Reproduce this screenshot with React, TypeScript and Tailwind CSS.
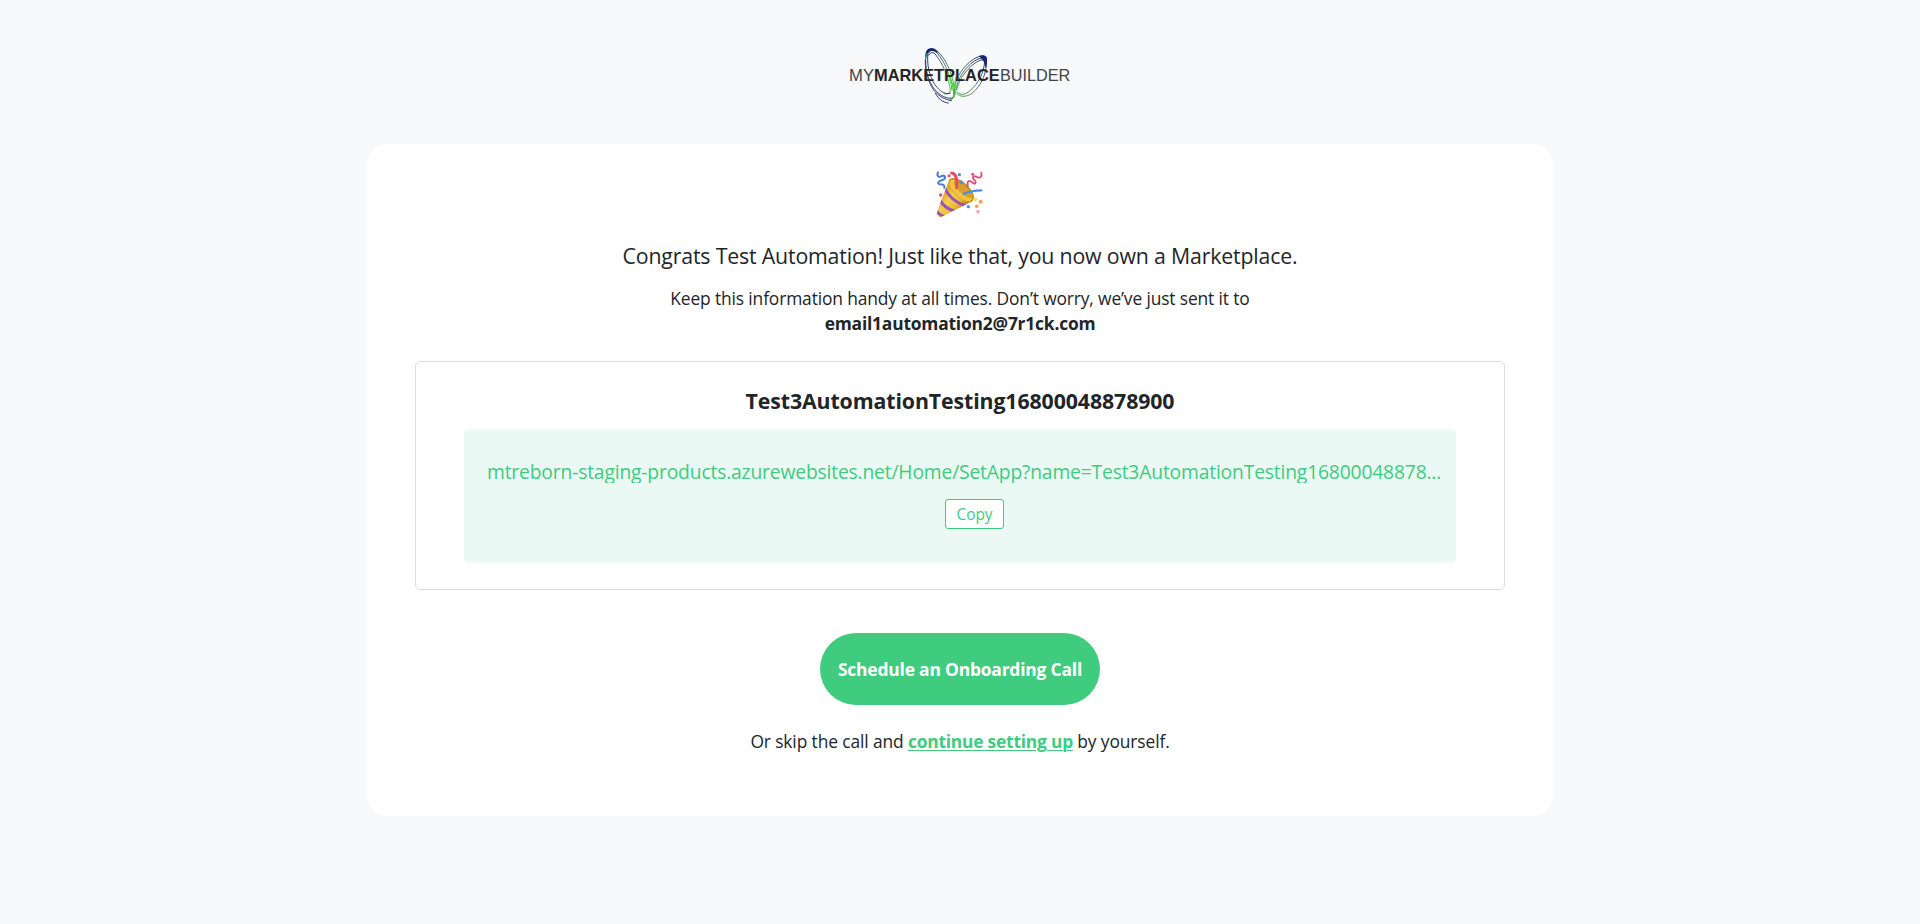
function Logo() {
  return (
    <svg width="240" height="70" viewBox="0 0 720 210" role="img" aria-label="MyMarketplaceBuilder">
      <defs>
        <linearGradient id="wingL" gradientUnits="userSpaceOnUse" x1="262" y1="30" x2="335" y2="170">
          <stop offset="0" stopColor="#15276a" />
          <stop offset="0.22" stopColor="#3f5f7c" />
          <stop offset="0.5" stopColor="#6a8a6c" />
          <stop offset="0.8" stopColor="#46c53a" />
          <stop offset="1" stopColor="#3a7f45" />
        </linearGradient>
        <linearGradient id="wingR" gradientUnits="userSpaceOnUse" x1="438" y1="48" x2="345" y2="165">
          <stop offset="0" stopColor="#15276a" />
          <stop offset="0.3" stopColor="#4e5c72" />
          <stop offset="0.7" stopColor="#5f7f66" />
          <stop offset="1" stopColor="#3fa93a" />
        </linearGradient>
        <linearGradient id="tail" gradientUnits="userSpaceOnUse" x1="255" y1="60" x2="330" y2="185">
          <stop offset="0" stopColor="#1b3a7c" />
          <stop offset="0.4" stopColor="#565e6c" />
          <stop offset="1" stopColor="#28356f" />
        </linearGradient>
      </defs>
      <g fill="none" strokeLinecap="round">
        <g stroke="url(#wingL)" strokeWidth="3">
          <path d="M258 50C260 22 280 20 295 36C318 60 336 96 342 140" />
          <path d="M262 48C268 24 282 30 292 40C313 64 330 100 336 150" />
          <path d="M266 46C276 30 284 40 290 48C308 72 324 106 331 148C331 160 322 164 312 161" />
          <path d="M342 140C344 165 340 176 334 178" />
        </g>
        <g stroke="url(#tail)" strokeWidth="3">
          <path d="M258 46C253 80 264 124 284 148C300 168 322 178 338 174" />
          <path d="M263 50C261 84 273 122 291 142C304 157 318 164 330 160" />
          <path d="M256 60C254 100 270 140 288 158C298 168 312 178 334 182" />
          <path d="M286 160C296 178 310 188 325 189" />
        </g>
        <g stroke="url(#wingR)" strokeWidth="3">
          <path d="M439 62C440 44 422 44 400 58C370 78 346 112 343 150" />
          <path d="M436 62C434 50 420 52 402 64C376 82 352 114 347 152" />
          <path d="M432 60C420 56 404 70 392 80C370 100 356 124 350 150" />
          <path d="M439 62C442 96 424 138 396 160C378 172 360 172 350 160" />
          <path d="M434 64C432 98 416 130 390 152C375 165 362 167 352 156" />
        </g>
        <g stroke="#49d535" strokeWidth="4">
          <path d="M324 100C335 120 342 140 342 172" />
          <path d="M348 112C343 130 343 142 346 162" />
        </g>
        <path d="M330 178C340 178 345 166 342 150" stroke="#3aa338" strokeWidth="3" />
      </g>
      <path d="M256 48C256 32 264 22 277 25C287 28 292 34 297 40C286 34 276 30 269 34C263 38 261 44 260 52Z" fill="#152468" />
      <path d="M416 48C430 43 441 46 441 56C442 66 440 76 436 84C435 70 431 60 416 48Z" fill="#182870" />
      <path d="M256 42L262 39L261 50L256 53Z" fill="#189b97" />
      <g fontFamily="'Liberation Sans', Arial, sans-serif" fontSize="49">
        <text x="27" y="122" fill="#3f4447" textLength="75" lengthAdjust="spacingAndGlyphs">MY</text>
        <text x="102" y="122" fill="#22262a" fontWeight="700" textLength="377" lengthAdjust="spacingAndGlyphs">MARKETPLACE</text>
        <text x="480" y="122" fill="#3f4447" textLength="211" lengthAdjust="spacingAndGlyphs">BUILDER</text>
      </g>
    </svg>
  );
}

function PartyPopper() {
  return (
    <svg width="80" height="65" viewBox="0 0 240 195" aria-hidden="true">
      <defs>
        <linearGradient id="cone" x1="0.15" y1="0.3" x2="0.8" y2="0.85">
          <stop offset="0" stopColor="#d99a1c" />
          <stop offset="0.35" stopColor="#f6d04a" />
          <stop offset="0.65" stopColor="#ecb935" />
          <stop offset="1" stopColor="#a8681a" />
        </linearGradient>
        <clipPath id="coneClip">
          <path d="M89 57C80 82 58 132 51 160C50 169 56 173 65 170C92 158 130 137 157 124Z" />
        </clipPath>
      </defs>
      <path d="M89 57C80 82 58 132 51 160C50 169 56 173 65 170C92 158 130 137 157 124Z" fill="url(#cone)" />
      <g clipPath="url(#coneClip)" fill="none" stroke="#9a50c0" strokeWidth="9">
        <path d="M74 84C84 106 106 128 138 138" />
        <path d="M60 120C68 136 84 148 106 154" />
        <path d="M48 150C54 160 62 166 74 170" />
      </g>
      <ellipse cx="124" cy="90" rx="47" ry="23" transform="rotate(43 124 90)" fill="#c88d20" />
      <ellipse cx="122" cy="92" rx="43" ry="19" transform="rotate(43 122 92)" fill="#f0c440" />
      <ellipse cx="129" cy="88" rx="36" ry="12" transform="rotate(43 129 88)" fill="#dba02a" />
      <g fill="none" strokeLinecap="round" strokeLinejoin="round">
        <path d="M95 39C108 40 112 56 110 83" stroke="#e8486b" strokeWidth="9" />
        <path d="M131 102C148 94 160 91 184 91" stroke="#4b8fe2" strokeWidth="7" />
        <path d="M54 37C49 48 57 54 65 48C76 44 79 54 70 59C58 62 50 68 57 72C67 75 75 71 73 84" stroke="#4a7fd4" strokeWidth="6" />
        <path d="M143 80L143 66C149 58 153 66 161 70C168 74 169 64 163 60C154 52 160 46 169 50C179 56 187 52 184 38" stroke="#dc5078" strokeWidth="5.5" />
      </g>
      <circle cx="87" cy="47" r="4.5" fill="#e8486b" />
      <circle cx="118" cy="44" r="5" fill="#4b8fe2" />
      <circle cx="158" cy="43" r="4.5" fill="#e0557a" />
      <circle cx="123" cy="67" r="5.5" fill="#4b8fe2" />
      <circle cx="62" cy="105" r="5" fill="#dc4c74" />
      <circle cx="166" cy="118" r="5.5" fill="#f4e04c" />
      <circle cx="182" cy="125" r="6" fill="#f0a25a" />
      <circle cx="145" cy="140" r="5" fill="#4b8fe2" />
      <circle cx="170" cy="139" r="5.5" fill="#f0a25a" />
      <circle cx="174" cy="155" r="5.5" fill="#f5a3c0" />
    </svg>
  );
}

export default function App() {
  return (
    <div className="flex min-h-[924px] flex-col items-center bg-[#f8f9fb] pt-10 font-['Open_Sans','Noto_Sans',sans-serif] text-[#212529]">
      <header className="mb-[34px] flex h-[70px]">
        <Logo />
      </header>

      <main className="flex h-[672px] w-[1186px] flex-col items-center rounded-[20px] bg-white px-12 pt-4 text-center">
        <PartyPopper />
        <h1 className="mt-[15px] text-[21.3px] leading-8 tracking-[-0.17px]">
          Congrats Test Automation! Just like that, you now own a Marketplace.
        </h1>
        <p className="mt-[14px] text-[17.4px] leading-[25px] tracking-[-0.135px]">
          Keep this information handy at all times. Don’t worry, we’ve just sent it to
          <br />
          <strong className="font-bold tracking-[-0.2px]">email1automation2@7r1ck.com</strong>
        </p>

        <section className="mt-[25px] h-[229px] w-full rounded-[5px] border border-[#dcdee0] px-12 pt-[23px]">
          <h2 className="text-[21.3px] font-bold leading-8 tracking-[-0.1px]">Test3AutomationTesting16800048878900</h2>
          <div className="mt-3 flex h-[134px] flex-col items-center rounded-[5px] bg-[#eaf9f3] pl-[23px] pt-[31px] text-[#40cc7f]">
            <div className="h-[23px] w-full overflow-hidden whitespace-nowrap text-left text-[19.3px] leading-[23px] tracking-[-0.175px]">
              mtreborn-staging-products.azurewebsites.net/Home/SetApp?name=Test3AutomationTesting16800048878...
            </div>
            <button className="ml-[6px] mt-4 h-[30px] w-[59px] rounded-[3px] border border-[#40cc7f] bg-white pt-0.5 text-[15.4px] leading-none">
              Copy
            </button>
          </div>
        </section>

        <button className="mt-[43px] h-[72px] w-[280px] shrink-0 rounded-full bg-[#40cc7f] text-[17.4px] font-bold tracking-[-0.18px] text-white">
          Schedule an Onboarding Call
        </button>
        <p className="mt-[23px] text-[17.4px] leading-[26px] tracking-[-0.12px]">
          Or skip the call and{" "}
          <a href="#" className="font-bold tracking-[-0.22px] text-[#40cc7f] underline decoration-1 underline-offset-2">
            continue setting up
          </a>{" "}
          by yourself.
        </p>
      </main>
    </div>
  );
}
